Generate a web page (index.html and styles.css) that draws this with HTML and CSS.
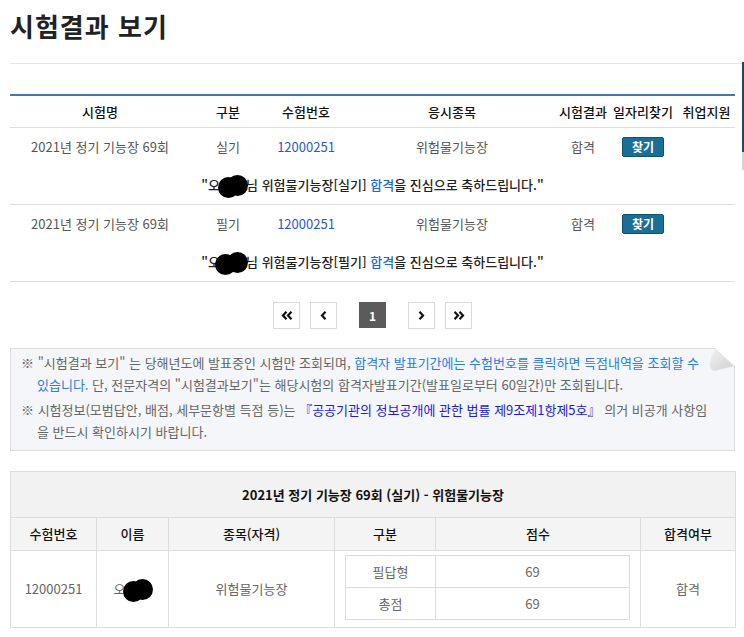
FILE: index.html
```html
<!DOCTYPE html>
<html lang="ko">
<head>
<meta charset="utf-8">
<title>시험결과 보기</title>
<link rel="stylesheet" href="styles.css">
</head>
<body>
<div class="page">
  <h1 class="title">시험결과 보기</h1>
  <div class="rule"></div>

  <table class="list">
    <colgroup>
      <col style="width:180px"><col style="width:76px"><col style="width:80px"><col style="width:212px"><col style="width:50px"><col style="width:70px"><col style="width:57px">
    </colgroup>
    <thead>
      <tr><th>시험명</th><th>구분</th><th>수험번호</th><th>응시종목</th><th>시험결과</th><th>일자리찾기</th><th>취업지원</th></tr>
    </thead>
    <tbody>
      <tr class="data">
        <td>2021년 정기 기능장 69회</td><td>실기</td><td><a class="num">12000251</a></td><td>위험물기능장</td><td>합격</td><td><span class="btn">찾기</span></td><td></td>
      </tr>
      <tr class="msg">
        <td colspan="7">"오<span class="blot"></span>님 위험물기능장[실기] <span class="pass">합격</span>을 진심으로 축하드립니다."</td>
      </tr>
      <tr class="data">
        <td>2021년 정기 기능장 69회</td><td>필기</td><td><a class="num">12000251</a></td><td>위험물기능장</td><td>합격</td><td><span class="btn">찾기</span></td><td></td>
      </tr>
      <tr class="msg">
        <td colspan="7">"오<span class="blot blot-wide"></span>님 위험물기능장[필기] <span class="pass">합격</span>을 진심으로 축하드립니다."</td>
      </tr>
    </tbody>
  </table>

  <div class="pager">
    <div class="pgroup">
      <span class="pbtn"><svg width="12" height="9" viewBox="0 0 12 9"><path d="M5.5 0.8 L2 4.5 L5.5 8.2 M10.5 0.8 L7 4.5 L10.5 8.2" fill="none" stroke="#111" stroke-width="2.2"/></svg></span>
      <span class="pbtn"><svg width="7" height="9" viewBox="0 0 7 9"><path d="M5.5 0.8 L2 4.5 L5.5 8.2" fill="none" stroke="#111" stroke-width="2.2"/></svg></span>
    </div>
    <span class="pcur">1</span>
    <div class="pgroup">
      <span class="pbtn"><svg width="7" height="9" viewBox="0 0 7 9"><path d="M1.5 0.8 L5 4.5 L1.5 8.2" fill="none" stroke="#111" stroke-width="2.2"/></svg></span>
      <span class="pbtn"><svg width="12" height="9" viewBox="0 0 12 9"><path d="M1.5 0.8 L5 4.5 L1.5 8.2 M6.5 0.8 L10 4.5 L6.5 8.2" fill="none" stroke="#111" stroke-width="2.2"/></svg></span>
    </div>
  </div>

  <div class="notice">
    <p>※ "시험결과 보기" 는 당해년도에 발표중인 시험만 조회되며, <span class="lnk">합격자 발표기간에는 수험번호를 클릭하면 득점내역을 조회할 수 있습니다.</span> 단, 전문자격의 "시험결과보기"는 해당시험의 합격자발표기간(발표일로부터 60일간)만 조회됩니다.</p>
    <p>※ 시험정보(모범답안, 배점, 세부문항별 득점 등)는 <span class="law">『공공기관의 정보공개에 관한 법률 제9조제1항제5호』</span> 의거 비공개 사항임을 반드시 확인하시기 바랍니다.</p>
    <svg class="fold" width="28" height="26" viewBox="0 0 28 26">
      <defs>
        <linearGradient id="fg" x1="0" y1="0" x2="1" y2="1">
          <stop offset="0" stop-color="#f2f2f2"/>
          <stop offset="1" stop-color="#cfcfcf"/>
        </linearGradient>
      </defs>
      <polygon points="8,0 28,0 28,18" fill="#ffffff"/>
      <path d="M8 1 C4 8 2 15 3.5 20 Q5 23.5 9 22.5 L27 18 Z" fill="url(#fg)"/>
      <line x1="8" y1="1" x2="27" y2="18" stroke="#e2e2e2" stroke-width="1"/>
    </svg>
  </div>

  <table class="detail">
    <colgroup>
      <col style="width:86px"><col style="width:72px"><col style="width:166px"><col style="width:101px"><col style="width:205px"><col style="width:95px">
    </colgroup>
    <thead>
      <tr class="cap"><th colspan="6">2021년 정기 기능장 69회 (실기) - 위험물기능장</th></tr>
      <tr class="head"><th>수험번호</th><th>이름</th><th>종목(자격)</th><th>구분</th><th>점수</th><th>합격여부</th></tr>
    </thead>
    <tbody>
      <tr class="body">
        <td>12000251</td>
        <td>오<span class="blot"></span></td>
        <td>위험물기능장</td>
        <td colspan="2" class="inner-cell">
          <table class="inner">
            <tr><td class="k">필답형</td><td>69</td></tr>
            <tr><td class="k">총점</td><td>69</td></tr>
          </table>
        </td>
        <td>합격</td>
      </tr>
    </tbody>
  </table>
</div>
<div class="edge"></div>
</body>
</html>
```

FILE: styles.css
```css
* { box-sizing: border-box; }
html, body { margin: 0; padding: 0; background: #fff; }
body {
  font-family: "Noto Sans CJK KR", "Noto Sans", sans-serif;
  font-size: 13px;
  color: #555;
  position: relative;
  overflow: hidden;
}
.page { padding: 0 9px 0 10px; width: 744px; }

.title {
  margin: 0;
  padding-top: 8px;
  font-size: 26px;
  line-height: 36px;
  font-weight: 700;
  color: #222;
  letter-spacing: 1px;
}
.rule {
  height: 1px;
  background: #e6e6e6;
  margin: 19px -9px 30px 0;
}

table { border-collapse: collapse; border-spacing: 0; table-layout: fixed; }

.list { width: 725px; border-top: 2px solid #3b78b5; }
.list th {
  height: 32px;
  font-weight: 500;
  color: #111;
  font-size: 13px;
  text-align: center;
  padding: 0;
  border-bottom: 1px solid #dedede;
  white-space: nowrap;
}
.list td { padding: 0; text-align: center; white-space: nowrap; }
.list .data td { height: 38px; color: #555; }
.list .msg td { height: 39px; color: #222; font-weight: 500; border-bottom: 1px solid #dedede; }
.num { color: #2b55d6; text-decoration: none; }
.pass { color: #1a6ae0; }
.btn {
  display: inline-block;
  width: 42px;
  height: 20px;
  line-height: 18px;
  background: #1b6e95;
  border: 1px solid #0f5274;
  border-radius: 2px;
  color: #fff;
  font-weight: 700;
  font-size: 12px;
  vertical-align: middle;
}

.blot {
  display: inline-block;
  position: relative;
  width: 26px;
  height: 14px;
  vertical-align: middle;
}
.blot::before, .blot::after {
  content: "";
  position: absolute;
  width: 21px;
  height: 21px;
  border-radius: 50%;
  background: #000;
  top: -3px;
}
.blot::before { left: -2px; top: -2px; }
.blot::after { left: 7px; top: -4px; }
.blot-wide::before { left: -5px; }

.pager {
  display: flex;
  justify-content: center;
  align-items: center;
  gap: 22px;
  margin: 20px 0 19px;
  height: 27px;
}
.pgroup { display: flex; gap: 10px; }
.pbtn {
  width: 27px; height: 27px;
  border: 1px solid #dadada;
  display: flex; align-items: center; justify-content: center;
}
.pcur {
  width: 27px; height: 26px;
  background: #5b5b5b;
  color: #fff;
  font-weight: 700;
  font-size: 12px;
  display: flex; align-items: center; justify-content: center;
}

.notice {
  position: relative;
  width: 725px;
  background: #f5f6fa;
  border: 1px solid #dcdcdc;
  padding: 3px 22px 7px 26px;
  color: #666;
  font-size: 13px;
  line-height: 22px;
}
.notice p { margin: 0; text-indent: -16px; }
.notice p + p { margin-top: 3px; }
.lnk { color: #2a7ae8; }
.law { color: #1a1ae0; }
.fold { position: absolute; top: -1px; right: -1px; }

.detail { width: 725px; margin-top: 20px; border: 1px solid #dcdcdc; }
.detail th, .detail td { border: 1px solid #dcdcdc; text-align: center; padding: 0; }
.detail .cap th { height: 46px; background: #f2f2f2; color: #111; font-weight: 700; font-size: 13px; }
.detail .head th { height: 33px; background: #f4f4f4; color: #111; font-weight: 500; font-size: 13px; }
.detail .body > td { height: 77px; color: #666; }
.detail .inner-cell { padding: 4px 10px 7px 10px; }
.inner { width: 100%; border: 1px solid #dcdcdc; }
.inner td { height: 32px; border: 1px solid #dcdcdc; color: #666; }
.inner td.k { width: 90px; }

.edge {
  position: absolute;
  right: 0;
  top: 62px;
  width: 2px;
  height: 90px;
  background: #24456a;
}
.edge::after {
  content: "";
  position: absolute;
  left: 0;
  top: 90px;
  width: 2px;
  height: 18px;
  background: #d4d4d4;
}
```
